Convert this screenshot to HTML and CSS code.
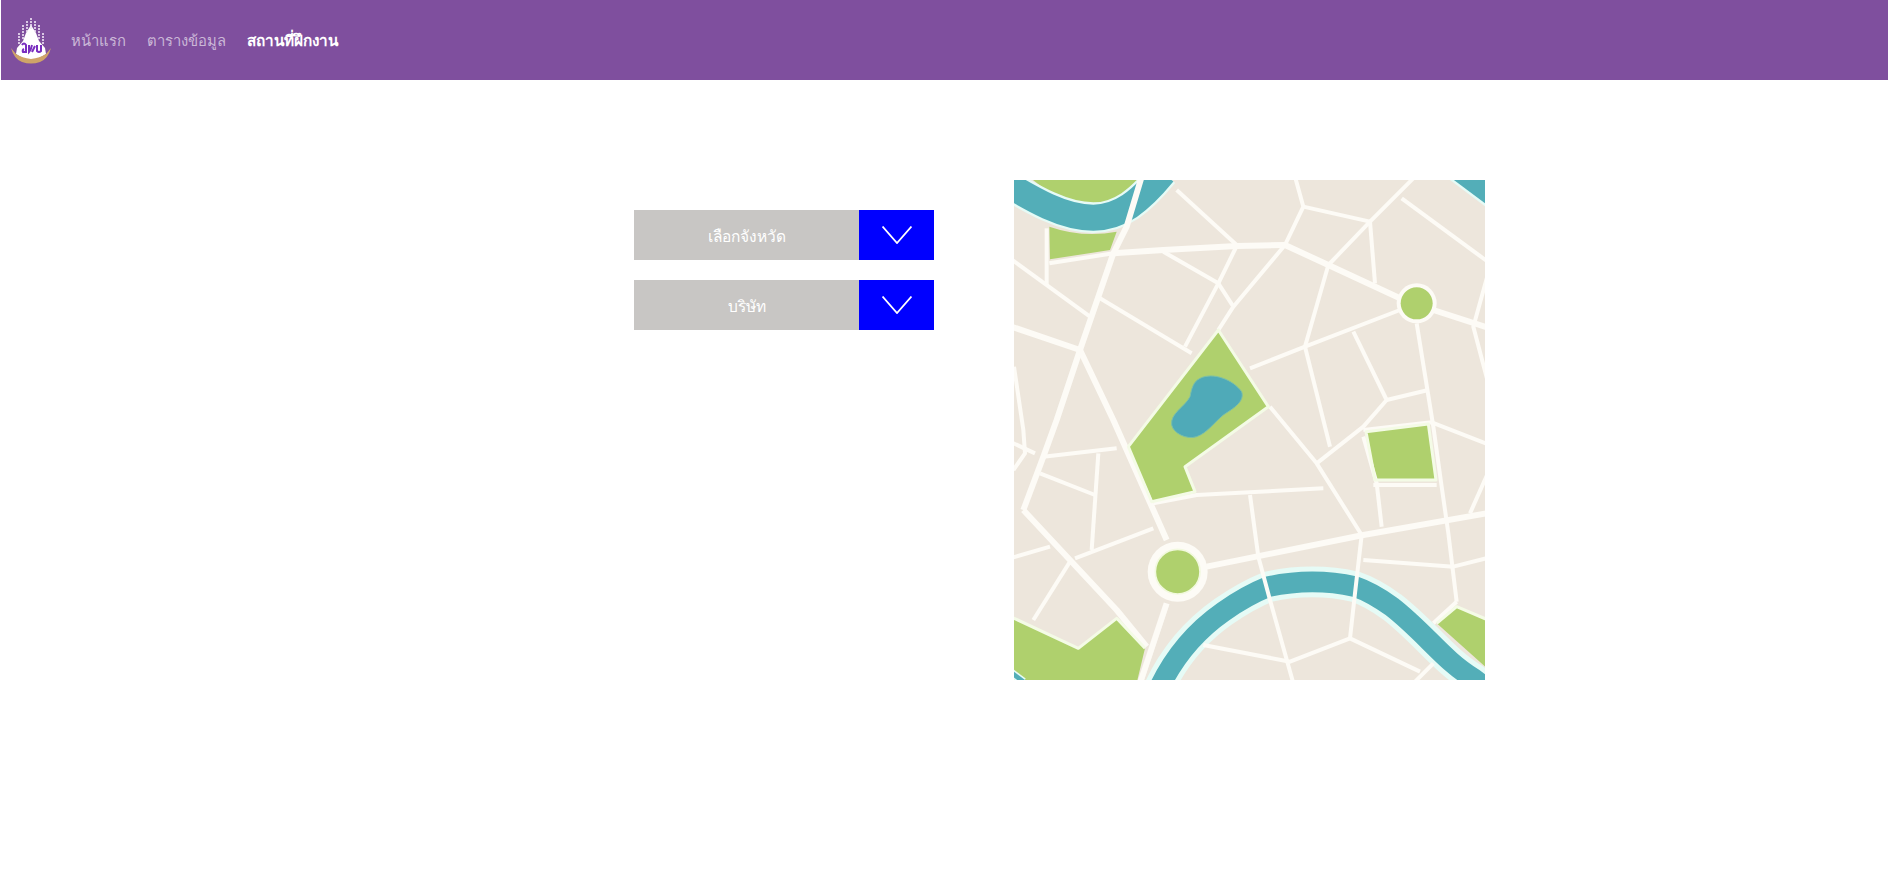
FILE: index.html
```html
<!DOCTYPE html>
<html lang="th">
<head>
<meta charset="utf-8">
<title>สถานที่ฝึกงาน</title>
<link rel="stylesheet" href="styles.css">
</head>
<body>
<nav class="navbar">
  <svg class="logo" viewBox="0 0 42 50" aria-label="โลโก้">
    <path class="logo-body" d="M21 10 L26 18 L29 26 L35 33 L36 39 Q21 50 6 39 L7 33 L13 26 L16 18Z"/>
    <g class="logo-spires">
      <path d="M21 3V14"/><path d="M17 6V18"/><path d="M25 6V18"/>
      <path d="M13 10V24"/><path d="M29 10V24"/><path d="M9 18V30"/><path d="M33 18V30"/>
    </g>
    <path class="logo-ring" d="M1 33 Q4 44 12 47 Q21 50 30 47 Q38 44 41 33 L36 39 Q30 43 21 44 Q12 43 6 39Z"/>
    <g class="logo-mark">
      <path d="M12 30 Q14 27 16 30 L16 37 L13 37 Q12 35 14 34"/>
      <path d="M19 30 L19 37 Q21 35 22 30 M22 37 L25 31"/>
      <path d="M27 30 L27 36 Q29 38 31 36 L31 30"/>
    </g>
  </svg>
  <ul class="nav-list">
    <li class="nav-item">หน้าแรก</li>
    <li class="nav-item">ตารางข้อมูล</li>
    <li class="nav-item nav-item-active">สถานที่ฝึกงาน</li>
  </ul>
</nav>
<main class="content">
  <section class="filters">
    <div class="select">
      <span class="select-label">เลือกจังหวัด</span>
      <span class="select-arrow"><svg class="chevron" viewBox="0 0 30 18"><path d="M0.500 0.500 L15 17 L29.500 0.500"/></svg></span>
    </div>
    <div class="select">
      <span class="select-label">บริษัท</span>
      <span class="select-arrow"><svg class="chevron" viewBox="0 0 30 18"><path d="M0.500 0.500 L15 17 L29.500 0.500"/></svg></span>
    </div>
  </section>
  <svg class="map" viewBox="42 30 1413 1500" aria-label="แผนที่">
    <defs>
      <filter id="soft" x="-5%" y="-5%" width="110%" height="110%"><feGaussianBlur stdDeviation="2"/></filter>
    </defs>
    <g filter="url(#soft)">
      <rect class="land" x="0" y="0" width="1500" height="1600"/>

      <g class="park">
        <path d="M60 0 H440 L370 90 Q280 125 170 85Z"/>
        <path d="M148 170 Q250 205 350 185 L330 240 L150 268Z"/>
        <path d="M655 480 L805 710 L555 890 L585 965 L455 995 L385 830Z"/>
        <path d="M1098 785 L1285 762 L1308 930 L1125 930Z"/>
        <path d="M0 1325 L42 1345 L235 1435 L350 1345 L435 1435 L405 1560 L0 1560Z"/>
        <path d="M1370 1310 L1500 1365 L1500 1530 L1310 1360Z"/>
      </g>

      <g class="water-edge">
        <path d="M0 30 C100 90 190 143 280 143 C360 143 420 95 490 10"/>
        <path d="M1360 -20 L1500 85"/>
        <path d="M470 1570 C510 1480 570 1395 670 1325 C720 1290 760 1268 805 1250 C890 1232 985 1232 1065 1250 C1110 1265 1140 1285 1175 1310 C1220 1345 1255 1380 1290 1415 C1330 1455 1370 1495 1420 1525 L1480 1570"/>
        <path class="edge-thin" d="M30 1505 L70 1535"/>
      </g>
      <g class="water">
        <path d="M0 30 C100 90 190 143 280 143 C360 143 420 95 490 10"/>
        <path d="M1360 -20 L1500 85"/>
        <path class="water-river" d="M470 1570 C510 1480 570 1395 670 1325 C720 1290 760 1268 805 1250 C890 1232 985 1232 1065 1250 C1110 1265 1140 1285 1175 1310 C1220 1345 1255 1380 1290 1415 C1330 1455 1370 1495 1420 1525 L1480 1570"/>
        <path class="water-thin" d="M30 1505 L70 1535"/>
      </g>
      <path class="lake" d="M600 625 C640 605 700 630 725 665 C735 695 700 715 670 735 C640 760 620 790 590 800 C560 810 520 790 515 765 C510 730 555 710 570 680 C575 655 580 635 600 625Z"/>

      <g class="road road-thick">
        <path d="M425 20 L380 170 L340 250 L240 540 L170 750 L130 860 L70 1020"/>
        <path d="M20 465 L240 540 L340 750 L500 1110"/>
        <path d="M70 1020 L210 1170 L350 1320 L440 1430"/>
        <path d="M620 1190 L1090 1095 L1470 1028"/>
        <path d="M1300 420 L1470 475"/>
        <path d="M855 225 L985 285 L1200 385"/>
        <path d="M340 250 L490 240 L710 228 L855 225"/>
        <path d="M500 1300 L420 1540"/>
      </g>
      <g class="road">
        <path d="M530 60 L710 225"/>
        <path d="M885 20 L910 110 L855 225 L700 410 L655 480"/>
        <path d="M910 110 L1110 155 L1245 20"/>
        <path d="M1110 155 L985 285 L915 530 L990 830"/>
        <path d="M1110 155 L1125 340"/>
        <path d="M1205 85 L1470 280"/>
        <path d="M710 228 L655 340 L555 530"/>
        <path d="M490 245 L655 340 L700 410"/>
        <path d="M140 175 L140 345"/>
        <path d="M148 280 L340 250"/>
        <path d="M30 265 L270 440"/>
        <path d="M300 385 L575 550"/>
        <path d="M750 595 L915 530 L1200 420"/>
        <path d="M1250 460 L1300 770 L1325 950 L1345 1090 L1370 1295"/>
        <path d="M1060 485 L1160 690 L1090 770 L950 880"/>
        <path d="M1160 690 L1285 660"/>
        <path d="M1470 290 L1420 470 L1470 660"/>
        <path d="M810 710 L950 880 L1085 1095"/>
        <path d="M1090 800 L1130 940 L1145 1070"/>
        <path d="M1120 945 H1310"/>
        <path d="M1090 780 L1295 757 L1470 825"/>
        <path d="M42 590 L70 780 L75 850 L40 900"/>
        <path d="M30 815 L105 850"/>
        <path d="M130 860 L350 835"/>
        <path d="M120 910 L285 975"/>
        <path d="M295 850 L275 1140"/>
        <path d="M30 1165 L150 1130"/>
        <path d="M210 1175 L100 1350"/>
        <path d="M225 1165 L460 1075"/>
        <path d="M460 1000 L590 975 L970 955"/>
        <path d="M750 975 L775 1160 L810 1290 L880 1540"/>
        <path d="M1085 1095 L1065 1270 L1050 1405"/>
        <path d="M1090 1170 L1360 1190 L1470 1162"/>
        <path d="M1470 895 L1410 1030"/>
        <path d="M610 1425 L870 1475 L1050 1405 L1260 1505"/>
        <path d="M1370 1295 L1300 1360"/>
        <path d="M1300 1480 L1240 1540"/>
      </g>
      <g class="park-line">
        <path d="M655 480 L805 710 L555 890 L585 965 L455 995 L385 830Z"/>
        <path d="M1098 785 L1285 762 L1308 930 L1125 930Z"/>
        <path d="M0 1325 L235 1435 L350 1345 L435 1435"/>
        <path d="M1310 1360 L1370 1310 L1500 1365"/>
      </g>

      <circle class="ring" cx="1250" cy="400" r="60"/>
      <circle class="spot" cx="1250" cy="400" r="48"/>
      <circle class="ring" cx="533" cy="1205" r="90"/>
      <circle class="spot spot-edge" cx="533" cy="1205" r="67"/>
    </g>
  </svg>
</main>
</body>
</html>
```
FILE: styles.css
```css
* { box-sizing: border-box; }
html, body { margin: 0; padding: 0; background: #fff; overflow: hidden; }
body { font-family: "Noto Sans", "Noto Sans CJK SC", Tahoma, sans-serif; font-size: 15.500px; }

.navbar { display: flex; align-items: center; height: 80px; margin-left: 1px; padding-left: 9px; background: #7f4f9e; }
.logo { width: 42px; height: 50px; flex: none; }
.logo-body { fill: #fff; }
.logo-spires path { fill: none; stroke: #f0e6f6; stroke-width: 1.6; stroke-dasharray: 2 1; }
.logo-ring { fill: #cfa468; }
.logo-mark path { fill: none; stroke: #7a2fc0; stroke-width: 2; }
.nav-list { display: flex; gap: 21px; margin: 0 0 0 19px; padding: 0; list-style: none; }
.nav-item { color: rgba(255, 255, 255, .6); font-size: 14.800px; line-height: 24px; }
.nav-item-active { color: #fff; font-size: 15.300px; font-weight: 600; }

.content { display: flex; align-items: flex-start; gap: 80px; padding: 100px 0 0 634px; }
.filters { display: flex; flex-direction: column; gap: 20px; width: 300px; padding-top: 30px; flex: none; }
.select { display: flex; height: 50px; color: #fff; }
.select-label { display: flex; align-items: center; justify-content: center; width: 225px; padding-top: 2px; background: #c8c6c4; font-weight: 500; }
.select-arrow { display: flex; align-items: center; justify-content: center; width: 75px; background: #00f; }
.chevron { width: 30px; height: 18px; }
.chevron path { fill: none; stroke: #fff; stroke-width: 1.8; }

.map { display: block; width: 471px; height: 500px; flex: none; }
.land { fill: #ede6dc; }
.park { fill: #afd06d; }
.water-edge path { fill: none; stroke: #e6fbf6; stroke-width: 92; }
.water-edge .edge-thin { stroke-width: 24; }
.water path { fill: none; stroke: #52aeb8; stroke-width: 78; }
.water .water-river { stroke-width: 62; }
.water .water-thin { stroke-width: 14; }
.lake { fill: #4faab8; stroke: #7cc0a8; stroke-width: 3; }
.road path { fill: none; stroke: #fdfbf6; stroke-width: 12; stroke-linejoin: round; }
.road-thick path { stroke-width: 18; }
.park-line path { fill: none; stroke: #f4fbe6; stroke-width: 9; stroke-linejoin: round; }
.ring { fill: #fdfbf6; }
.spot { fill: #afd06d; }
.spot-edge { stroke: #f2f9df; stroke-width: 5; }
```
